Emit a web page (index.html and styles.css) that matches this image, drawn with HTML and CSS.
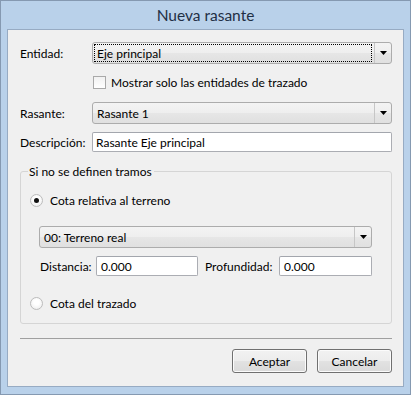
FILE: index.html
```html
<!DOCTYPE html>
<html lang="es">
<head>
<meta charset="utf-8">
<title>Nueva rasante</title>
<link rel="stylesheet" href="styles.css">
</head>
<body>
<div class="window">
  <div class="titlebar">Nueva rasante</div>
  <div class="client">
    <div class="row r-entidad">
      <span class="lbl">Entidad:</span>
      <div class="combo wide">
        <div class="combo-text"><span class="focusrect">Eje principal</span></div>
        <div class="combo-btn"><svg width="7" height="4" viewBox="0 0 7 4"><polygon points="0,0 7,0 3.5,4" fill="#000"/></svg></div>
      </div>
    </div>
    <div class="row r-check">
      <span class="checkbox"></span>
      <span class="check-text">Mostrar solo las entidades de trazado</span>
    </div>
    <div class="row r-rasante">
      <span class="lbl">Rasante:</span>
      <div class="combo wide">
        <div class="combo-text plain">Rasante 1</div>
        <div class="combo-btn"><svg width="7" height="4" viewBox="0 0 7 4"><polygon points="0,0 7,0 3.5,4" fill="#000"/></svg></div>
      </div>
    </div>
    <div class="row r-desc">
      <span class="lbl">Descripción:</span>
      <div class="textbox wide">Rasante Eje principal</div>
    </div>
    <div class="group">
      <span class="legend">Si no se definen tramos</span>
      <div class="radio-row r-radio1">
        <span class="radio checked"><span class="dot"></span></span>
        <span class="radio-text">Cota relativa al terreno</span>
      </div>
      <div class="combo terreno">
        <div class="combo-text plain">00: Terreno real</div>
        <div class="combo-btn"><svg width="7" height="4" viewBox="0 0 7 4"><polygon points="0,0 7,0 3.5,4" fill="#000"/></svg></div>
      </div>
      <div class="fields">
        <span class="lbl-dist">Distancia:</span>
        <div class="textbox tb-dist">0.000</div>
        <span class="lbl-prof">Profundidad:</span>
        <div class="textbox tb-prof">0.000</div>
      </div>
      <div class="radio-row r-radio2">
        <span class="radio"></span>
        <span class="radio-text">Cota del trazado</span>
      </div>
    </div>
    <div class="separator"></div>
    <div class="buttons">
      <div class="btn default">Aceptar</div>
      <div class="btn">Cancelar</div>
    </div>
  </div>
</div>
</body>
</html>
```
FILE: styles.css
```css
html, body {
  margin: 0;
  padding: 0;
  background: #ffffff;
}
body {
  font-family: "Lato", "Noto Sans", sans-serif;
  font-size: 12px;
  color: #000;
}
.window {
  width: 411px;
  height: 395px;
  box-sizing: border-box;
  border: 1px solid #8599b1;
  background: #b9d1ea;
  padding: 0 6px 7px 6px;
  display: flex;
  flex-direction: column;
}
.titlebar {
  height: 28px;
  line-height: 28px;
  text-align: center;
  font-size: 15.5px;
  color: #1f2f45;
  flex: none;
}
.client {
  flex: 1;
  border: 1px solid #97abc3;
  background: #f0f0f0;
  padding: 12px 11px 0 12px;
  display: flex;
  flex-direction: column;
}
.row {
  display: flex;
  align-items: center;
  flex: none;
}
.lbl {
  width: 72px;
  flex: none;
}
.r-entidad { height: 22px; }
.r-check { height: 13px; margin-top: 12px; }
.r-rasante { height: 22px; margin-top: 13px; }
.r-desc { height: 20px; margin-top: 8px; }

.combo {
  box-sizing: border-box;
  height: 22px;
  border: 1px solid #acacac;
  border-radius: 3px;
  background: linear-gradient(to bottom, #f3f3f3 0%, #eeeeee 50%, #e6e6e6 51%, #e0e0e0 100%);
  display: flex;
  flex: none;
}
.combo.wide { width: 300px; }
.combo-text {
  flex: 1;
  display: flex;
  align-items: stretch;
  padding: 1px 2px 1px 1px;
}
.combo-text.plain {
  align-items: center;
  padding: 0 0 0 4px;
}
.focusrect {
  flex: 1;
  border: 1px dotted #000;
  display: flex;
  align-items: center;
  padding-left: 2px;
}
.combo-btn {
  width: 16px;
  flex: none;
  border-left: 1px solid #c6c6c6;
  display: flex;
  align-items: center;
  justify-content: center;
}
.checkbox {
  box-sizing: border-box;
  width: 13px;
  height: 13px;
  margin-left: 73px;
  border: 1px solid #a9a9a9;
  background: linear-gradient(to bottom, #f1f1f1, #ffffff);
  flex: none;
}
.check-text { margin-left: 5px; }

.textbox {
  box-sizing: border-box;
  height: 20px;
  border: 1px solid #abadb3;
  border-top-color: #a3a6ad;
  border-radius: 2px;
  background: #ffffff;
  padding-left: 3px;
  display: flex;
  align-items: center;
  flex: none;
}
.textbox.wide { width: 300px; }

.group {
  box-sizing: border-box;
  width: 372px;
  margin-top: 19px;
  border: 1px solid #d5d5d5;
  border-radius: 3px;
  padding: 0 19px 13px 18px;
  display: flex;
  flex-direction: column;
  flex: none;
}
.legend {
  align-self: flex-start;
  height: 15px;
  line-height: 15px;
  margin-top: -8px;
  margin-left: -11px;
  padding: 0 2px 0 1px;
  background: #f0f0f0;
}
.radio-row {
  display: flex;
  align-items: center;
  height: 14px;
  margin-left: -9px;
}
.r-radio1 { margin-top: 14px; }
.r-radio2 { margin-top: 20px; }
.radio {
  box-sizing: border-box;
  width: 13px;
  height: 13px;
  border-radius: 50%;
  border: 1px solid #bcbcbc;
  background: radial-gradient(circle at 50% 40%, #ffffff 30%, #e8e8e8 100%);
  display: flex;
  align-items: center;
  justify-content: center;
  flex: none;
}
.dot {
  width: 5px;
  height: 5px;
  border-radius: 50%;
  background: #111;
}
.radio-text { margin-left: 7px; }
.combo.terreno {
  width: 333px;
  margin-top: 19px;
}
.fields {
  display: flex;
  align-items: center;
  height: 20px;
  margin-top: 8px;
}
.lbl-dist { width: 57px; padding-left: 1px; box-sizing: border-box; flex: none; }
.tb-dist { width: 102px; }
.lbl-prof { width: 74px; margin-left: 7px; flex: none; }
.tb-prof { width: 93px; }
.tb-dist, .tb-prof { padding-left: 4px; }

.separator {
  height: 1px;
  width: 372px;
  background: #a0a0a0;
  margin-top: 14px;
  flex: none;
}
.buttons {
  display: flex;
  justify-content: flex-end;
  gap: 10px;
  margin-top: 10px;
  width: 372px;
}
.btn {
  box-sizing: border-box;
  width: 75px;
  height: 24px;
  border: 1px solid #707070;
  border-radius: 3px;
  background: linear-gradient(to bottom, #f2f2f2 0%, #ececec 50%, #e2e2e2 51%, #dadada 100%);
  box-shadow: inset 0 0 0 1px #fbfbfb;
  display: flex;
  align-items: center;
  justify-content: center;
}
```
